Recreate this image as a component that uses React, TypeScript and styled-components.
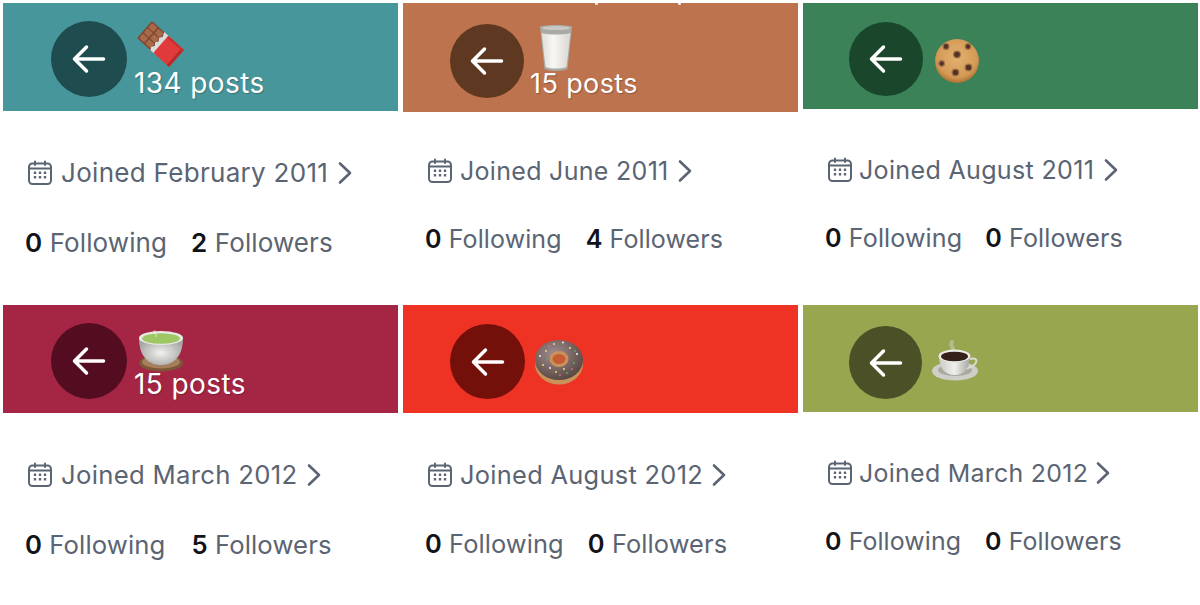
import React from "react";
import styled, { createGlobalStyle } from "styled-components";

const Global = createGlobalStyle`
  html, body { margin: 0; padding: 0; background: #fff; }
  body { width: 1200px; height: 605px; overflow: hidden; font-family: Inter, "Liberation Sans", sans-serif; }
`;

const Page = styled.div`
  display: grid;
  grid-template-columns: repeat(3, 395px);
  grid-template-rows: 302px 300px;
  column-gap: 5px;
  padding: 3px 0 0 3px;
`;

const Card = styled.section``;

const Banner = styled.header<{ $bg: string; $h: number; $pad: number; $top: number; $gap: number }>`
  position: relative;
  box-sizing: border-box;
  height: ${p => p.$h}px;
  background: ${p => p.$bg};
  padding: ${p => p.$top}px 0 0 ${p => p.$pad}px;
  display: flex;
  align-items: flex-start;
  gap: ${p => p.$gap}px;
  overflow: hidden;
`;

const Back = styled.div<{ $bg: string; $d: number }>`
  flex: none;
  width: ${p => p.$d}px;
  height: ${p => p.$d}px;
  border-radius: 50%;
  background: ${p => p.$bg};
  display: flex;
  align-items: center;
  justify-content: center;
`;

const Titles = styled.div<{ $top: number }>`
  display: flex;
  flex-direction: column;
  align-items: flex-start;
  padding-top: ${p => p.$top}px;
`;

const EmojiBox = styled.div<{ $x: number }>`
  margin-left: ${p => p.$x}px;
  display: flex;
`;

const Posts = styled.div<{ $size: number; $shift: number }>`
  color: #fff;
  font-size: ${p => p.$size}px;
  letter-spacing: 0.4px;
  line-height: 30px;
  margin-top: ${p => p.$shift}px;
  white-space: nowrap;
  text-shadow: 1px 1px 1px rgba(0, 0, 0, 0.25);
`;

const Descender = styled.span<{ $x: number }>`
  position: absolute;
  top: 0;
  left: ${p => p.$x}px;
  width: 3px;
  height: 2px;
  border-radius: 0 0 2px 2px;
  background: rgba(255, 255, 255, 0.9);
`;

const Meta = styled.div<{ $top: number; $size: number; $rowGap: number }>`
  padding: ${p => p.$top}px 0 0 24px;
  font-size: ${p => p.$size}px;
  line-height: 30px;
  color: #5b6472;
  display: flex;
  flex-direction: column;
  gap: ${p => p.$rowGap}px;
`;

const Joined = styled.div<{ $gap: number }>`
  display: flex;
  align-items: center;
  gap: ${p => p.$gap}px;
  letter-spacing: 0.3px;
`;

const ChevronBox = styled.span<{ $x: number }>`
  display: flex;
  margin-left: ${p => p.$x}px;
`;

const Stats = styled.div<{ $gap: number }>`
  display: flex;
  gap: ${p => p.$gap}px;
  margin-left: -2px;
  letter-spacing: 0.1px;
`;

const Stat = styled.span``;

const Count = styled.b`
  color: #111318;
  font-weight: 600;
`;

const Arrow = () => (
  <svg width="36" height="36" viewBox="0 0 36 36" fill="none" stroke="#fff" strokeWidth="3.5" strokeLinecap="round" strokeLinejoin="round">
    <path d="M32.500 18H3.500M15.500 6L3.500 18L15.500 30" />
  </svg>
);

const Calendar = () => (
  <svg width="26" height="26" viewBox="0 0 26 26" fill="none" stroke="#5b6472" strokeWidth="2" strokeLinecap="round">
    <rect x="2" y="3.500" width="22" height="20.500" rx="3.500" />
    <path d="M8 1.500V5M18 1.500V5M2 8.500H24" />
    <g fill="#5b6472" stroke="none">
      <rect x="11.800" y="11.500" width="2.400" height="2.400" rx=".5" />
      <rect x="16.800" y="11.500" width="2.400" height="2.400" rx=".5" />
      <rect x="6.800" y="16" width="2.400" height="2.400" rx=".5" />
      <rect x="11.800" y="16" width="2.400" height="2.400" rx=".5" />
      <rect x="16.800" y="16" width="2.400" height="2.400" rx=".5" />
      <rect x="6.800" y="11.500" width="2.400" height="2.400" rx=".5" />
    </g>
  </svg>
);

const Chevron = () => (
  <svg width="16" height="24" viewBox="0 0 16 24" fill="none" stroke="#5b6472" strokeWidth="2.600" strokeLinecap="round" strokeLinejoin="round">
    <path d="M3 2.500L13 12L3 21.500" />
  </svg>
);

const Chocolate = () => (
  <svg width="48" height="48" viewBox="0 0 48 48">
    <g transform="matrix(.66 -.75 .744 .674 0 17)">
      <rect x="0" y="0" width="22.700" height="20" rx="1.500" fill="#7f4a30" />
      <g fill="#a9694a">
        <rect x="1.500" y="1.500" width="5.800" height="7" rx="1" />
        <rect x="8.500" y="1.500" width="5.800" height="7" rx="1" />
        <rect x="15.500" y="1.500" width="5.800" height="7" rx="1" />
        <rect x="1.500" y="10" width="5.800" height="7" rx="1" />
        <rect x="8.500" y="10" width="5.800" height="7" rx="1" />
        <rect x="15.500" y="10" width="5.800" height="7" rx="1" />
      </g>
      <path d="M0 18L3 16.500L6 18.500L9 16.500L12 18.500L15 16.500L18 18.500L22.700 16.500V25H0Z" fill="#dcdcdc" />
      <rect x="0" y="22" width="22.700" height="21" rx="1" fill="#e13a3a" />
      <rect x="0" y="40" width="22.700" height="3" fill="#b82a2a" />
      <rect x="20.500" y="22" width="2.200" height="21" fill="#c92f2f" />
    </g>
  </svg>
);

const Milk = () => (
  <svg width="36" height="48" viewBox="0 0 36 48">
    <defs>
      <linearGradient id="milk" x1="0" x2="1" y1="0" y2="0">
        <stop offset="0" stopColor="#dedcd7" />
        <stop offset=".4" stopColor="#f8f7f3" />
        <stop offset="1" stopColor="#d8d6d1" />
      </linearGradient>
    </defs>
    <path d="M2 2.500C10 .5 26 .5 34 2.500L29.500 45C24 47.500 12 47.500 6.500 45Z" fill="#a9aaa5" />
    <path d="M3.500 9C12 11 24 11 32.500 9L28.500 43C23 45 13 45 7.500 43Z" fill="url(#milk)" />
    <ellipse cx="18" cy="4" rx="14" ry="2" fill="#c8c9c4" />
  </svg>
);

const Cookie = () => (
  <svg width="46" height="46" viewBox="0 0 46 46">
    <defs>
      <radialGradient id="cookie" cx=".5" cy=".42" r=".6">
        <stop offset="0" stopColor="#e3b172" />
        <stop offset=".75" stopColor="#d39a55" />
        <stop offset="1" stopColor="#a9692b" />
      </radialGradient>
    </defs>
    <circle cx="23" cy="23" r="22" fill="url(#cookie)" />
    <g fill="#54322a" stroke="#a67543" strokeWidth="1.200">
      <circle cx="12" cy="8.500" r="3" />
      <circle cx="34" cy="8.500" r="2.800" />
      <circle cx="23" cy="16.500" r="3.400" />
      <circle cx="7.700" cy="25.500" r="2.800" />
      <circle cx="34.500" cy="29.500" r="3.400" />
      <circle cx="21.500" cy="34.500" r="3.400" />
    </g>
  </svg>
);

const Tea = () => (
  <svg width="46" height="42" viewBox="0 0 46 42">
    <defs>
      <radialGradient id="teacup" cx=".5" cy=".55" r=".55">
        <stop offset="0" stopColor="#f1f1f0" />
        <stop offset="1" stopColor="#a6a6a4" />
      </radialGradient>
    </defs>
    <ellipse cx="23" cy="33" rx="22" ry="8.500" fill="#7c5636" />
    <ellipse cx="23" cy="32" rx="19" ry="6.500" fill="#a57f5c" />
    <path d="M1 8C1 27 11 35 23 35C35 35 45 27 45 8Z" fill="url(#teacup)" />
    <ellipse cx="23" cy="8" rx="22" ry="7" fill="#e9e9e5" />
    <ellipse cx="23" cy="8.500" rx="19" ry="5.300" fill="#9ec763" />
    <path d="M17 0C15 3 19 4 18 7" fill="none" stroke="#fff" strokeOpacity=".35" strokeWidth="2" />
  </svg>
);

const Donut = () => (
  <svg width="50" height="46" viewBox="0 0 50 46">
    <defs>
      <radialGradient id="glaze" cx=".4" cy=".35" r=".7">
        <stop offset="0" stopColor="#a08d92" />
        <stop offset=".6" stopColor="#75625f" />
        <stop offset="1" stopColor="#54443f" />
      </radialGradient>
    </defs>
    <ellipse cx="25" cy="25" rx="24" ry="20.500" fill="#c9925a" />
    <ellipse cx="25" cy="21" rx="24" ry="20" fill="url(#glaze)" />
    <ellipse cx="25" cy="20" rx="8" ry="6.500" fill="#c75b33" stroke="#c9925a" strokeWidth="3" />
    <g fill="#e8d98d">
      <circle cx="12" cy="12" r="1" /><circle cx="20" cy="5" r="1" /><circle cx="36" cy="9" r="1" />
      <circle cx="9" cy="26" r="1" /><circle cx="22" cy="33" r="1" /><circle cx="30" cy="30" r="1" />
    </g>
    <g fill="#5da36a">
      <circle cx="40" cy="24" r="1" /><circle cx="33" cy="34" r="1" /><circle cx="13" cy="20" r="1" /><circle cx="41" cy="12" r="1" />
    </g>
    <g fill="#f2f2f2">
      <circle cx="29" cy="3.500" r="1" /><circle cx="43" cy="15" r="1" /><circle cx="16" cy="29" r="1" /><circle cx="6" cy="17" r="1" />
    </g>
    <g fill="#c46d8f">
      <circle cx="15" cy="7" r="1" /><circle cx="38" cy="30" r="1" /><circle cx="26" cy="36" r="1" />
    </g>
  </svg>
);

const Coffee = () => (
  <svg width="48" height="42" viewBox="0 0 48 42">
    <defs>
      <linearGradient id="cup" x1="0" x2="1" y1="0" y2="0">
        <stop offset="0" stopColor="#c9c9c5" />
        <stop offset=".5" stopColor="#efefec" />
        <stop offset="1" stopColor="#a5a5a0" />
      </linearGradient>
    </defs>
    <path d="M21 2C18 6 24 7 21 11" fill="none" stroke="#b5bb8c" strokeWidth="4" strokeLinecap="round" />
    <ellipse cx="24" cy="31" rx="23" ry="9.500" fill="#cfcec9" />
    <ellipse cx="24" cy="30" rx="17" ry="6" fill="#a9a8a1" />
    <path d="M39 19C46 17 47 21 43 25C41 27 37 28 34 29" fill="none" stroke="#dcdbd3" strokeWidth="2" />
    <path d="M8 16C8 28 14 35 24 35C33 35 39 28 39 16Z" fill="url(#cup)" />
    <ellipse cx="23.500" cy="16" rx="16" ry="6.500" fill="#ecebe6" />
    <ellipse cx="23.500" cy="16.500" rx="13.500" ry="4.800" fill="#35201a" />
  </svg>
);

type C = {
  bg: string; dark: string; h: number; pad: number; top: number; d: number; gap: number;
  emojiTop: number; emojiX: number; emoji: React.ReactNode; posts?: string; postsSize?: number; postsShift?: number;
  joined: string; following: number; followers: number; joinGap: number; chevronX: number;
  metaTop: number; size: number; rowGap: number; statGap: number; marks?: number[];
};

const cards: C[] = [
  { bg: "#47969b", dark: "#1f4c4f", h: 108, pad: 48, top: 18, d: 76, gap: 7, emojiTop: 0, emojiX: 3, emoji: <Chocolate />, posts: "134 posts", postsSize: 28, postsShift: -1,
    joined: "Joined February 2011", following: 0, followers: 2, joinGap: 8, chevronX: 1, metaTop: 47, size: 26, rowGap: 40, statGap: 24 },
  { bg: "#bd734e", dark: "#5f3822", h: 109, pad: 47, top: 21, d: 74, gap: 6, emojiTop: 0, emojiX: 8, emoji: <Milk />, posts: "15 posts", postsSize: 27, postsShift: -3,
    joined: "Joined June 2011", following: 0, followers: 4, joinGap: 7, chevronX: 1, metaTop: 44, size: 25, rowGap: 38, statGap: 24, marks: [192, 275] },
  { bg: "#3c8259", dark: "#1a462c", h: 106, pad: 46, top: 19, d: 74, gap: 11, emojiTop: 16, emojiX: 0, emoji: <Cookie />,
    joined: "Joined August 2011", following: 0, followers: 0, joinGap: 6, chevronX: 3, metaTop: 46, size: 25.100, rowGap: 38, statGap: 23 },
  { bg: "#a52644", dark: "#540d20", h: 108, pad: 48, top: 18, d: 76, gap: 7, emojiTop: 7, emojiX: 4, emoji: <Tea />, posts: "15 posts", postsSize: 28, postsShift: -3,
    joined: "Joined March 2012", following: 0, followers: 5, joinGap: 8, chevronX: 1, metaTop: 47, size: 25.700, rowGap: 40, statGap: 26 },
  { bg: "#ee3325", dark: "#74100a", h: 108, pad: 47, top: 19, d: 75, gap: 9, emojiTop: 15, emojiX: 0, emoji: <Donut />,
    joined: "Joined August 2012", following: 0, followers: 0, joinGap: 7, chevronX: 1, metaTop: 47, size: 25.400, rowGap: 39, statGap: 24 },
  { bg: "#98a650", dark: "#4b5027", h: 107, pad: 46, top: 21, d: 73, gap: 9, emojiTop: 14, emojiX: 0, emoji: <Coffee />,
    joined: "Joined March 2012", following: 0, followers: 0, joinGap: 6, chevronX: 1, metaTop: 46, size: 24.900, rowGap: 38, statGap: 24 },
];

export default function App() {
  return (
    <>
      <Global />
      <Page>
        {cards.map((c, i) => (
          <Card key={i}>
            <Banner $bg={c.bg} $h={c.h} $pad={c.pad} $top={c.top} $gap={c.gap}>
              {c.marks?.map(x => <Descender key={x} $x={x} />)}
              <Back $bg={c.dark} $d={c.d}><Arrow /></Back>
              <Titles $top={c.emojiTop}>
                <EmojiBox $x={c.emojiX}>{c.emoji}</EmojiBox>
                {c.posts && <Posts $size={c.postsSize!} $shift={c.postsShift!}>{c.posts}</Posts>}
              </Titles>
            </Banner>
            <Meta $top={c.metaTop} $size={c.size} $rowGap={c.rowGap}>
              <Joined $gap={c.joinGap}>
                <Calendar />
                <span>{c.joined}</span>
                <ChevronBox $x={c.chevronX}><Chevron /></ChevronBox>
              </Joined>
              <Stats $gap={c.statGap}>
                <Stat><Count>{c.following}</Count> Following</Stat>
                <Stat><Count>{c.followers}</Count> Followers</Stat>
              </Stats>
            </Meta>
          </Card>
        ))}
      </Page>
    </>
  );
}
